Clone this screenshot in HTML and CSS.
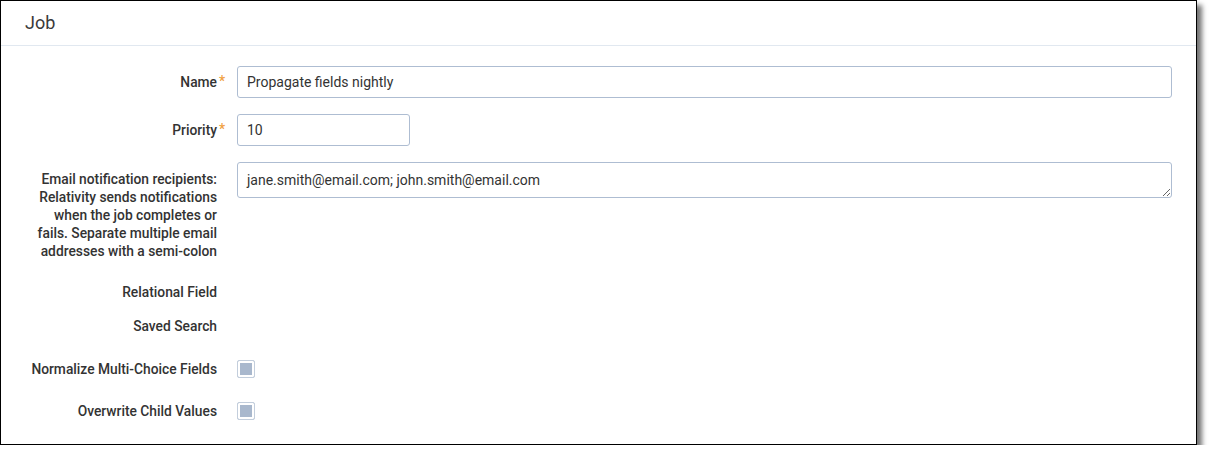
FILE: index.html
```html
<!DOCTYPE html>
<html lang="en">
<head>
    <meta charset="UTF-8">
    <title>Job</title>
    <link rel="stylesheet" href="styles.css">
</head>
<body>

    <div class="panel">
        <div class="panel-title">Job</div>

        <form class="job-form">
            <div class="row">
                <label class="field-label required" for="jobName">Name</label>
                <input type="text" id="jobName" class="text-input" value="Propagate fields nightly">
            </div>

            <div class="row">
                <label class="field-label required" for="priority">Priority</label>
                <input type="text" id="priority" class="text-input short" value="10">
            </div>

            <div class="row top">
                <label class="field-label multi" for="recipients">Email notification recipients: Relativity sends notifications when the job completes or fails. Separate multiple email addresses with a semi-colon</label>
                <textarea id="recipients" class="text-input area" rows="1">jane.smith@email.com; john.smith@email.com</textarea>
            </div>

            <div class="row plain first-plain">
                <span class="field-label">Relational Field</span>
            </div>

            <div class="row plain">
                <span class="field-label">Saved Search</span>
            </div>

            <div class="row plain check-first">
                <span class="field-label">Normalize Multi-Choice Fields</span>
                <span class="check-box"></span>
            </div>

            <div class="row plain check-next">
                <span class="field-label">Overwrite Child Values</span>
                <span class="check-box"></span>
            </div>
        </form>
    </div>

</body>
</html>
```

FILE: styles.css
```css
body {
    margin: 0;
    padding: 0;
    background: #fff;
    font-family: Roboto, "Liberation Sans", Arial, sans-serif;
    color: #333;
}

/* Card */
.panel {
    box-sizing: border-box;
    width: 1197px;
    height: 445px;
    border: 1px solid #000;
    background: #fff;
    box-shadow: 5px 5px 5px rgba(0, 0, 0, 0.55);
}

.panel-title {
    height: 44px;
    line-height: 44px;
    padding: 0 24px;
    font-size: 18px;
    color: #3a3a3a;
    border-bottom: 1px solid #e1e8f0;
}

/* Form rows */
.job-form {
    display: flex;
    flex-direction: column;
    padding: 20px 24px 0 0;
}

.row {
    display: flex;
    align-items: center;
    gap: 20px;
    margin-top: 16px;
}

.row:first-child {
    margin-top: 0;
}

.row.top {
    align-items: flex-start;
}

.row.plain {
    height: 18px;
}

.row.first-plain {
    margin-top: 23px;
}

.row.check-first {
    margin-top: 25px;
}

.row.check-next {
    margin-top: 24px;
}

.field-label {
    position: relative;
    box-sizing: border-box;
    flex: 0 0 216px;
    padding-left: 28px;
    text-align: right;
    font-size: 13.8px;
    font-weight: 500;
    line-height: 18px;
    color: #333;
}

.field-label.required::after {
    content: "*";
    position: absolute;
    right: -8px;
    top: -1px;
    color: #f0a040;
}

.field-label.multi {
    padding-top: 8px;
}

.text-input {
    box-sizing: border-box;
    flex: 1;
    min-width: 0;
    height: 32px;
    padding: 0 9px;
    border: 1px solid #aebdd2;
    border-radius: 3px;
    font-family: inherit;
    font-size: 14px;
    color: #333;
    background: #fff;
    outline: none;
}

.text-input.short {
    flex: none;
    width: 173px;
}

.text-input.area {
    height: 36px;
    padding: 8px 9px;
    line-height: 18px;
    resize: vertical;
}

/* Checkbox */
.check-box {
    box-sizing: border-box;
    width: 18px;
    height: 18px;
    border: 1px solid #c3cedc;
    border-radius: 2px;
    background: #a9b8cd;
    box-shadow: inset 0 0 0 2px #fff;
}
```
